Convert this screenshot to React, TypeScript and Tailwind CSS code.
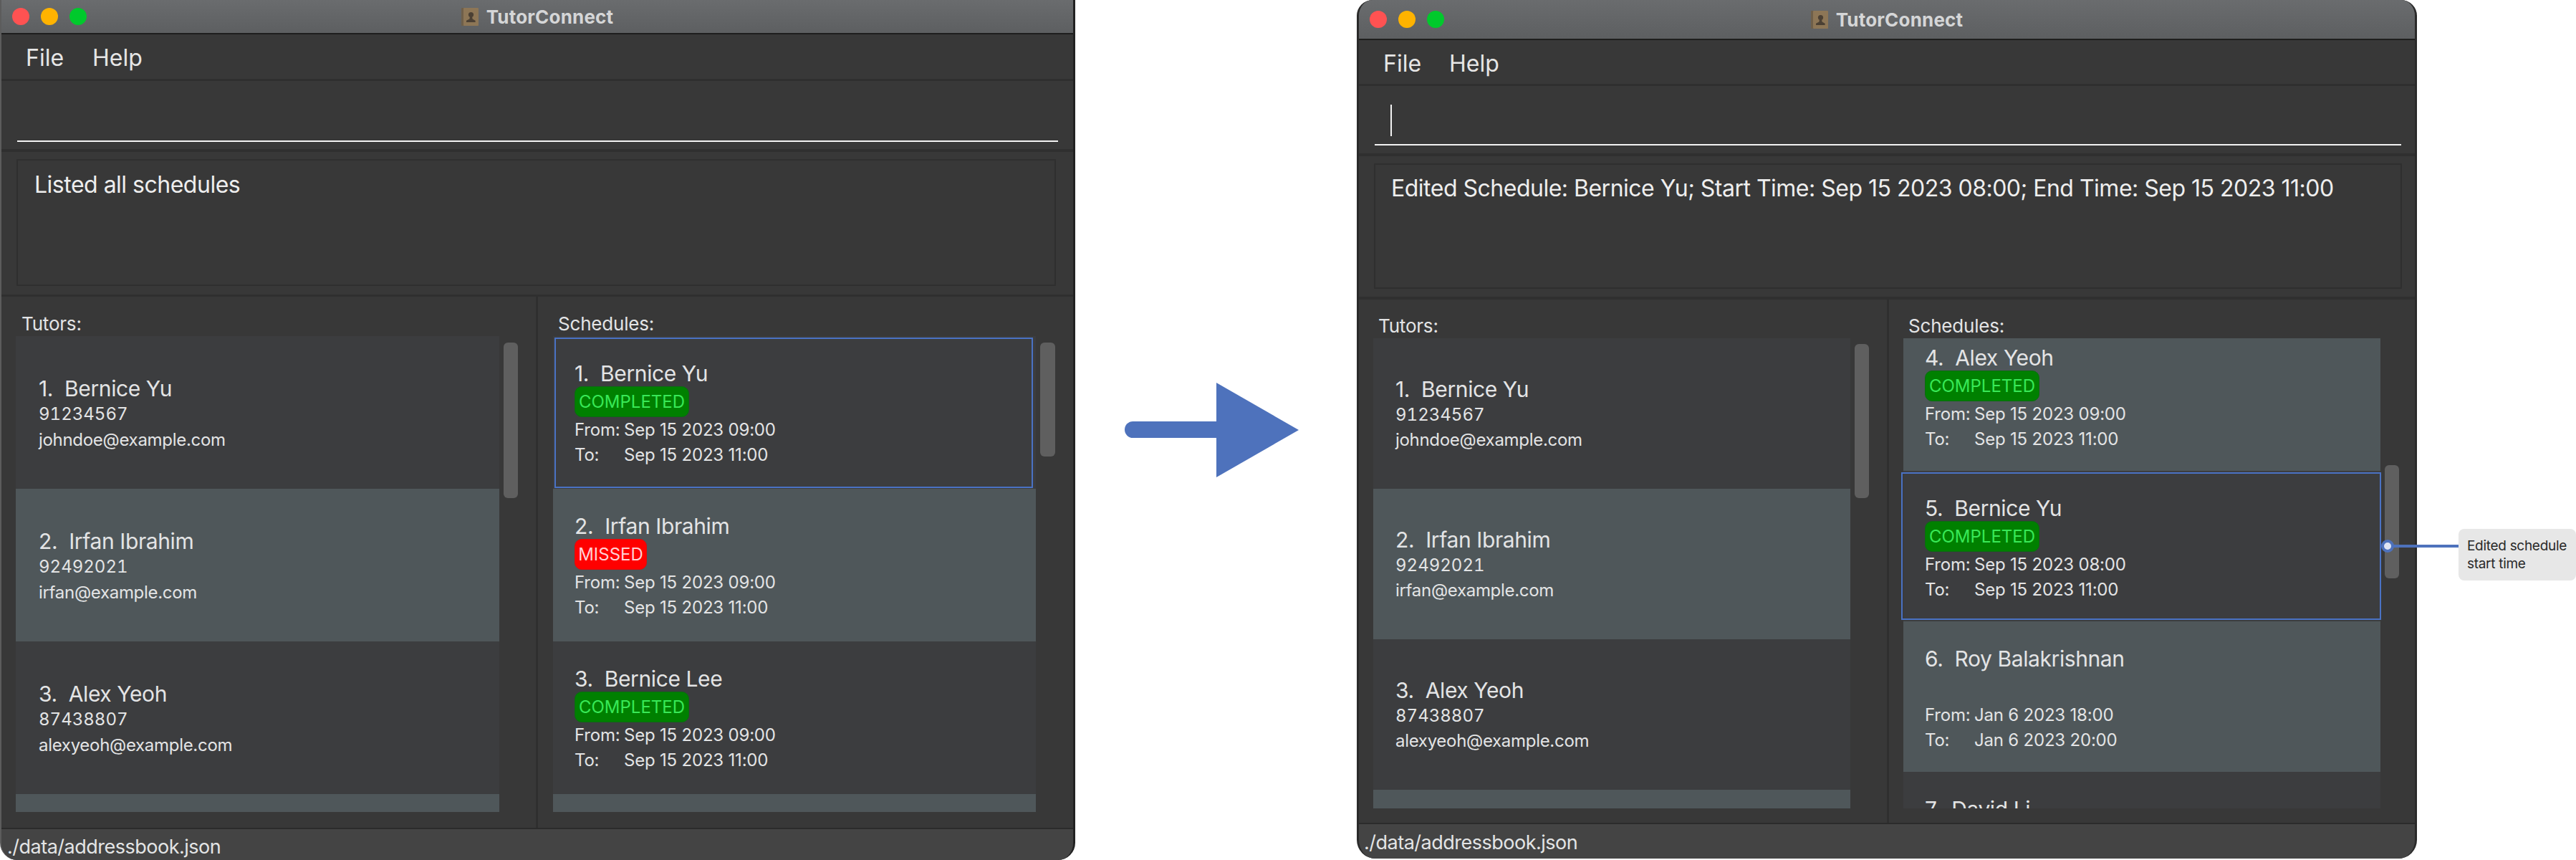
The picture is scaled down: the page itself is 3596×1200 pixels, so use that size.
import React from 'react';

type Tutor = { name: string; phone: string; email: string };
type Schedule = { name: string; status?: 'COMPLETED' | 'MISSED'; from: string; to: string };

const TUTORS: Tutor[] = [
  { name: '1.  Bernice Yu', phone: '91234567', email: 'johndoe@example.com' },
  { name: '2.  Irfan Ibrahim', phone: '92492021', email: 'irfan@example.com' },
  { name: '3.  Alex Yeoh', phone: '87438807', email: 'alexyeoh@example.com' },
];

const LEFT_SCHEDULES: Schedule[] = [
  { name: '1.  Bernice Yu', status: 'COMPLETED', from: 'Sep 15 2023 09:00', to: 'Sep 15 2023 11:00' },
  { name: '2.  Irfan Ibrahim', status: 'MISSED', from: 'Sep 15 2023 09:00', to: 'Sep 15 2023 11:00' },
  { name: '3.  Bernice Lee', status: 'COMPLETED', from: 'Sep 15 2023 09:00', to: 'Sep 15 2023 11:00' },
];

const RIGHT_SCHEDULES: Schedule[] = [
  { name: '4.  Alex Yeoh', status: 'COMPLETED', from: 'Sep 15 2023 09:00', to: 'Sep 15 2023 11:00' },
  { name: '5.  Bernice Yu', status: 'COMPLETED', from: 'Sep 15 2023 08:00', to: 'Sep 15 2023 11:00' },
  { name: '6.  Roy Balakrishnan', from: 'Jan 6 2023 18:00', to: 'Jan 6 2023 20:00' },
  { name: '7.  David Li', from: '', to: '' },
];

const DARK_ROW = 'bg-[#3c3d3f]';
const LIGHT_ROW = 'bg-[#4f575a]';

const AppIcon = () => (
  <svg width="24" height="25" viewBox="0 0 24 25" className="shrink-0">
    <rect x="0" y="0" width="24" height="25" rx="1" fill="#6f5f49" />
    <rect x="3" y="0" width="21" height="25" rx="1" fill="#8d7656" />
    <circle cx="13.5" cy="9.5" r="3.6" fill="#4b4034" />
    <path d="M12 12h3l.6 3.4 4 2.4V20H7v-2.2l4.4-2.4z" fill="#4b4034" />
  </svg>
);

const TitleBar = ({ className }: { className: string }) => (
  <div className={`${className} shrink-0 grid grid-cols-3 items-center border-b-2 border-[#1e1e1e] bg-gradient-to-b from-[#6a6c6e] to-[#5d5f61]`}>
    <div className="flex items-center gap-[16px] pl-[15px]">
      <div className="w-[24px] h-[24px] rounded-full bg-[#ff5252]" />
      <div className="w-[24px] h-[24px] rounded-full bg-[#ffb300]" />
      <div className="w-[24px] h-[24px] rounded-full bg-[#00c92c]" />
    </div>
    <div className="flex items-center justify-center gap-[11px] whitespace-nowrap text-[26px] tracking-[0.2px] font-bold text-[#d5d6d7]">
      <AppIcon />
      <span>TutorConnect</span>
    </div>
  </div>
);

const TutorRow = ({ tutor, index, rowClass, pad, lead }: { tutor: Tutor; index: number; rowClass: string; pad: string; lead: string }) => (
  <div className={`${rowClass} ${pad} ${lead} shrink-0 text-[#e3e4e5] ${index % 2 === 0 ? DARK_ROW : LIGHT_ROW}`}>
    <div className="text-[30px] tracking-[-0.4px] whitespace-pre">{tutor.name}</div>
    <div className="text-[24px] tabular-nums">{tutor.phone}</div>
    <div className="text-[24px] tracking-[-0.3px]">{tutor.email}</div>
  </div>
);

const Badge = ({ status }: { status: 'COMPLETED' | 'MISSED' }) =>
  status === 'COMPLETED' ? (
    <div className="w-[160px] h-[43px] flex items-center justify-center rounded-[10px] border-[1px] border-[#0b6b12] bg-[#008000] text-[24px] text-[#38e857]">
      {status}
    </div>
  ) : (
    <div className="w-[101px] h-[43px] flex items-center justify-center rounded-[10px] border-[1px] border-[#e00a0a] bg-[#ff0000] text-[24px] text-[#ffd0d4]">
      {status}
    </div>
  );

const ScheduleRow = ({ item, dark, rowClass, selected }: { item: Schedule; dark: boolean; rowClass: string; selected?: string }) => (
  <div className={`relative ${rowClass} shrink-0 pt-[34px] pl-[30px] text-[#e3e4e5] ${dark ? DARK_ROW : LIGHT_ROW}`}>
    <div className="h-[36px] leading-[36px] text-[30px] tracking-[-0.4px] whitespace-pre">{item.name}</div>
    <div className="h-[43px]">{item.status && <Badge status={item.status} />}</div>
    {item.from && (
      <div className="text-[24px] leading-[35px] tracking-[-0.2px]">
        <div className="flex"><span className="w-[69px]">From:</span><span>{item.from}</span></div>
        <div className="flex"><span className="w-[69px]">To:</span><span>{item.to}</span></div>
      </div>
    )}
    {selected && <div className={`absolute border-2 border-[#4a72c4] ${selected}`} />}
  </div>
);

const LeftWindow = () => (
  <div className="w-[1501px] h-[1200px] shrink-0 flex flex-col overflow-hidden rounded-b-[24px] border-l-2 border-r-[3px] border-l-[#5c5c5c] border-r-[#222222] bg-[#383838]">
    <TitleBar className="h-[48px]" />

    <div className="h-[65px] shrink-0 flex items-center gap-[40px] pl-[34px] pt-[4px] border-b-[3px] border-[#2f2f2f] text-[32px] text-[#e6e6e6]">
      <span>File</span>
      <span>Help</span>
    </div>

    <div className="h-[99px] shrink-0 flex flex-col justify-end border-b-4 border-[#2f2f2f] pl-[22px] pr-[21px] pb-[10px]">
      <div className="border-b-2 border-[#f2f2f2]" />
    </div>

    <div className="h-[202px] shrink-0 border-b-[3px] border-[#2f2f2f] pt-[10px] pb-[12px] pl-[21px] pr-[24px]">
      <div className="h-full border-2 border-[#2f2f2f] pt-[14px] pl-[23px] text-[32px] leading-[40px] tracking-[-0.5px] text-[#eeeeee]">
        Listed all schedules
      </div>
    </div>

    <div className="flex-1 flex min-h-0">
      <div className="w-[749px] shrink-0 border-r-[3px] border-[#2f2f2f]">
        <div className="h-[55px] pt-[20px] pl-[28px] text-[26px] leading-[36px] tracking-[-0.2px] text-[#e3e4e5]">Tutors:</div>
        <div className="flex ml-[20px]">
          <div className="w-[675px] h-[664px] overflow-hidden">
            {TUTORS.map((t, i) => (
              <TutorRow key={t.name} tutor={t} index={i} rowClass="h-[213px]" pad="pt-[55px] pl-[32px]" lead="leading-[36px]" />
            ))}
            <div className={`h-[30px] ${LIGHT_ROW}`} />
          </div>
          <div className="ml-[6px] w-[20px] pt-[9px]">
            <div className="h-[217px] rounded-[6px] bg-[#5f5f5f]" />
          </div>
        </div>
      </div>

      <div className="flex-1">
        <div className="h-[55px] pt-[20px] pl-[28px] text-[26px] leading-[36px] tracking-[-0.2px] text-[#e3e4e5]">Schedules:</div>
        <div className="flex ml-[21px]">
          <div className="w-[674px] h-[664px] overflow-hidden">
            {LEFT_SCHEDULES.map((s, i) => (
              <ScheduleRow
                key={s.name}
                item={s}
                dark={i % 2 === 0}
                rowClass="h-[213px]"
                selected={i === 0 ? 'top-[2px] bottom-[1px] left-[2px] right-[4px]' : undefined}
              />
            ))}
            <div className={`h-[30px] ${LIGHT_ROW}`} />
          </div>
          <div className="ml-[6px] w-[21px] pt-[9px]">
            <div className="h-[159px] rounded-[6px] bg-[#5f5f5f]" />
          </div>
        </div>
      </div>
    </div>

    <div className="h-[45px] shrink-0 flex items-center border-t-2 border-[#2b2b2b] bg-[#444444] pl-[8px] pt-[8px] text-[27px] tracking-[-0.5px] text-[#e3e4e5]">
      ./data/addressbook.json
    </div>
  </div>
);

const RightWindow = () => (
  <div className="w-[1480px] h-[1198px] shrink-0 flex flex-col overflow-hidden rounded-t-[22px] rounded-b-[26px] border-x-[3px] border-[#2a2a2a] bg-[#383838]">
    <TitleBar className="h-[56px]" />

    <div className="h-[64px] shrink-0 flex items-center gap-[39px] pl-[34px] pt-[4px] border-b-[3px] border-[#2f2f2f] text-[32px] text-[#e6e6e6]">
      <span>File</span>
      <span>Help</span>
    </div>

    <div className="h-[98px] shrink-0 flex flex-col justify-end border-b-4 border-[#2f2f2f] pl-[22px] pr-[19px] pb-[11px]">
      <div className="border-b-2 border-[#f2f2f2] pl-[22px] pb-[11px]">
        <div className="w-[2px] h-[44px] bg-[#f2f2f2]" />
      </div>
    </div>

    <div className="h-[200px] shrink-0 border-b-4 border-[#2f2f2f] pt-[10px] pb-[11px] pl-[21px] pr-[18px]">
      <div className="h-full border-2 border-[#2f2f2f] pt-[13px] pl-[22px] text-[32px] leading-[40px] tracking-[-0.5px] whitespace-nowrap text-[#eeeeee]">
        Edited Schedule: Bernice Yu; Start Time: Sep 15 2023 08:00; End Time: Sep 15 2023 11:00
      </div>
    </div>

    <div className="flex-1 flex min-h-0">
      <div className="w-[740px] shrink-0 border-r-[3px] border-[#2f2f2f]">
        <div className="h-[54px] pt-[19px] pl-[27px] text-[26px] leading-[36px] tracking-[-0.2px] text-[#e3e4e5]">Tutors:</div>
        <div className="flex ml-[20px]">
          <div className="w-[666px] h-[656px] overflow-hidden">
            {TUTORS.map((t, i) => (
              <TutorRow key={t.name} tutor={t} index={i} rowClass="h-[210px]" pad="pt-[54px] pl-[31px]" lead="leading-[35px]" />
            ))}
            <div className={`h-[30px] ${LIGHT_ROW}`} />
          </div>
          <div className="ml-[6px] w-[20px] pt-[8px]">
            <div className="h-[215px] rounded-[6px] bg-[#5f5f5f]" />
          </div>
        </div>
      </div>

      <div className="flex-1">
        <div className="h-[54px] pt-[19px] pl-[27px] text-[26px] leading-[36px] tracking-[-0.2px] text-[#e3e4e5]">Schedules:</div>
        <div className="flex ml-[20px]">
          <div className="w-[666px] h-[656px] [clip-path:inset(0_-4px)]">
            <div className="-mt-[25px]">
              {RIGHT_SCHEDULES.map((s, i) => (
                <ScheduleRow
                  key={s.name}
                  item={s}
                  dark={i % 2 === 1}
                  rowClass="h-[210px]"
                  selected={i === 1 ? 'top-[2px] bottom-[2px] -left-[3px] -right-[1px]' : undefined}
                />
              ))}
            </div>
          </div>
          <div className="ml-[6px] w-[20px] pt-[177px]">
            <div className="h-[158px] rounded-[6px] bg-[#5f5f5f]" />
          </div>
        </div>
      </div>
    </div>

    <div className="h-[50px] shrink-0 flex items-center border-t-2 border-[#2b2b2b] bg-[#444444] pl-[7px] pt-[4px] text-[27px] tracking-[-0.5px] text-[#e3e4e5]">
      ./data/addressbook.json
    </div>
  </div>
);

export default function App() {
  return (
    <div className="relative w-[3596px] h-[1200px] overflow-hidden flex bg-white font-['Inter',sans-serif]">
      <LeftWindow />

      <div className="w-[393px] shrink-0 flex items-center justify-center pr-[12px]">
        <svg width="243" height="132" viewBox="0 0 243 132">
          <rect x="0" y="54" width="140" height="23" rx="11.5" fill="#4e72bc" />
          <polygon points="128,0 243,66 128,132" fill="#4e72bc" />
        </svg>
      </div>

      <RightWindow />

      {/* callout over the edited row */}
      <div className="absolute left-[3324px] top-[738px] flex items-start">
        <svg width="108" height="72" viewBox="0 0 108 72" className="shrink-0">
          <rect x="9" y="22" width="99" height="4" fill="#4e72bc" />
          <circle cx="9" cy="24" r="7" fill="#dfe5f3" stroke="#4e72bc" strokeWidth="4" />
        </svg>
        <div className="w-[164px] h-[72px] rounded-[8px] bg-[#e7e7e7] pt-[11px] pl-[12px] text-[19px] leading-[25px] tracking-[-0.3px] text-[#2a2a2a] whitespace-nowrap">
          <div>Edited schedule</div>
          <div>start time</div>
        </div>
      </div>
    </div>
  );
}
